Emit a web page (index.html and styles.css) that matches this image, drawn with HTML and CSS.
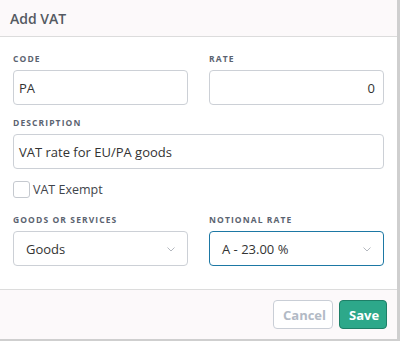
FILE: index.html
```html
<!DOCTYPE html>
<html>
<head>
<meta charset="utf-8">
<link rel="stylesheet" href="styles.css">
</head>
<body>
<div class="modal">
  <div class="modal-header"><h1 class="title">Add VAT</h1></div>
  <div class="modal-body">
    <div class="row">
      <div class="field">
        <label class="label">CODE</label>
        <div class="input">PA</div>
      </div>
      <div class="field">
        <label class="label">RATE</label>
        <div class="input input-right">0</div>
      </div>
    </div>
    <div class="field">
      <label class="label">DESCRIPTION</label>
      <div class="input">VAT rate for EU/PA goods</div>
    </div>
    <div class="check-row">
      <span class="checkbox"></span>
      <span class="check-label">VAT Exempt</span>
    </div>
    <div class="row">
      <div class="field">
        <label class="label">GOODS OR SERVICES</label>
        <div class="select"><span>Goods</span><svg class="chev" width="8" height="5" viewBox="0 0 8 5"><path d="M0.5 0.5 L4 4 L7.5 0.5" fill="none" stroke="#b4b8bf" stroke-width="1"/></svg></div>
      </div>
      <div class="field">
        <label class="label">NOTIONAL RATE</label>
        <div class="select select-focus"><span>A - 23.00 %</span><svg class="chev" width="8" height="5" viewBox="0 0 8 5"><path d="M0.5 0.5 L4 4 L7.5 0.5" fill="none" stroke="#b4b8bf" stroke-width="1"/></svg></div>
      </div>
    </div>
  </div>
  <div class="modal-footer">
    <button class="btn btn-cancel">Cancel</button>
    <button class="btn btn-save">Save</button>
  </div>
</div>
</body>
</html>
```
FILE: styles.css
```css
* { box-sizing: border-box; }
html, body { margin: 0; padding: 0; }
body {
  background: #cfcfcf;
  font-family: "Open Sans", "Noto Sans", sans-serif;
  width: 400px;
  height: 341px;
  overflow: hidden;
}
.modal {
  width: 397px;
  height: 339px;
  background: #ffffff;
  display: flex;
  flex-direction: column;
}
.modal-header {
  height: 37px;
  background: #fcf9fa;
  border-bottom: 1px solid #dcdcdc;
  padding: 0 10px;
  display: flex;
  align-items: center;
}
.title {
  margin: 0;
  font-size: 14px;
  font-weight: 600;
  color: #545a62;
}
.modal-body {
  height: 253px;
  padding: 16px 13px 0 13px;
  display: flex;
  flex-direction: column;
  border-bottom: 1px solid #dcdcdc;
}
.row {
  display: grid;
  grid-template-columns: 175px 175px;
  column-gap: 21px;
}
.field {
  display: flex;
  flex-direction: column;
  margin-bottom: 12px;
}
.label {
  display: block;
  font-size: 8.5px;
  font-weight: 700;
  letter-spacing: 1.1px;
  color: #5b6370;
  line-height: 12px;
  margin-bottom: 5px;
}
.input, .select {
  height: 35px;
  border: 1px solid #ccd0d6;
  border-radius: 4px;
  font-size: 13px;
  color: #333;
  display: flex;
  align-items: center;
  padding: 0 8px 0 5px;
  background: #fff;
}
.input-right { justify-content: flex-end; }
.check-row {
  display: flex;
  align-items: center;
  margin-top: 0;
  margin-bottom: 16px;
}
.checkbox {
  width: 17px;
  height: 17px;
  border: 1px solid #c5c9cf;
  border-radius: 3px;
  background: #fff;
}
.check-label {
  margin-left: 3px;
  font-size: 12.5px;
  font-weight: 500;
  color: #3f444b;
}
.select {
  justify-content: space-between;
  padding: 0 12px 0 12px;
}
.select-focus {
  border-color: #1d78a4;
}
.chev { margin-top: 1px; }
.modal-footer {
  flex: 1;
  background: #fcf9fa;
  display: flex;
  justify-content: flex-end;
  align-items: flex-start;
  padding: 10px 10px 0 0;
  gap: 6px;
}
.btn {
  height: 29px;
  font-family: "Open Sans", "Noto Sans", sans-serif;
  font-size: 13px;
  font-weight: 700;
  border-radius: 4px;
  padding: 0 9px;
}
.btn-cancel {
  width: 60px;
  background: #fff;
  border: 1px solid #c9ced6;
  color: #b2bac5;
}
.btn-save {
  width: 48px;
  background: #2da88a;
  border: 1px solid #1e7f67;
  color: #fff;
}
```
